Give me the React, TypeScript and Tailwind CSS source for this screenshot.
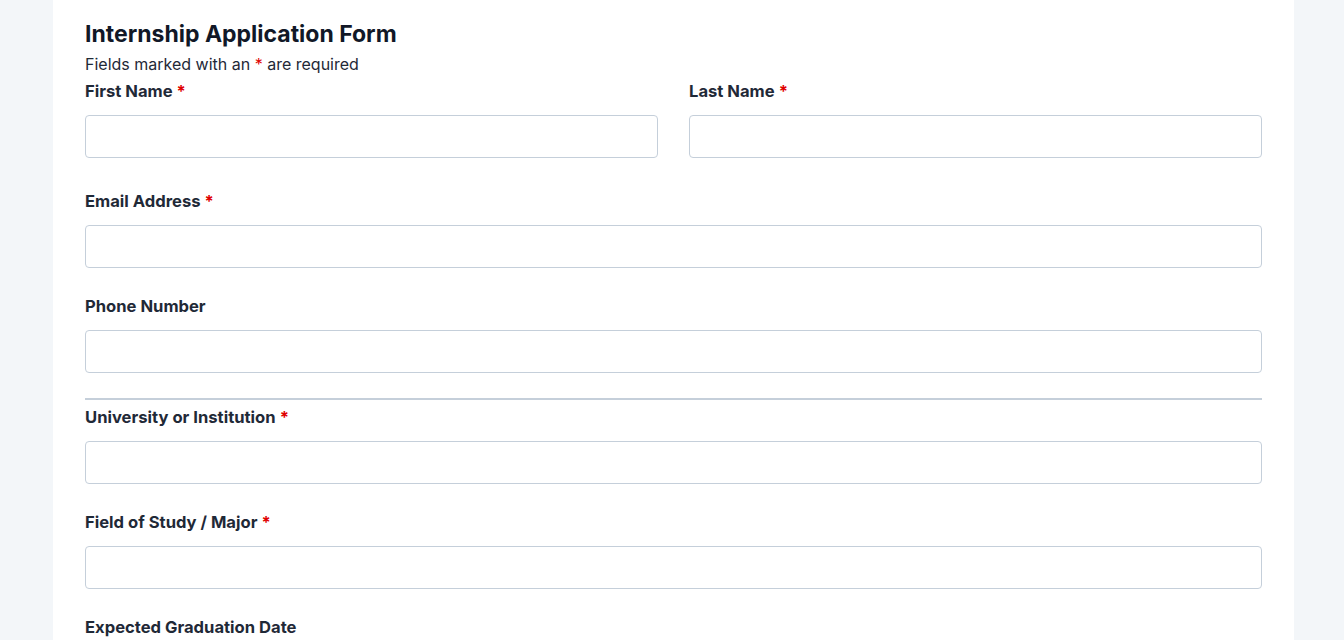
import React from 'react';

interface FieldProps {
  label: string;
  required?: boolean;
  type?: string;
}

const Field: React.FC<FieldProps> = ({ label, required, type = 'text' }) => (
  <div className="flex flex-col">
    <label className="text-[16.6px] leading-6 font-bold text-[#1f2937]">
      {label}
      {required && <span className="text-[#e00000] ml-1">*</span>}
    </label>
    <input
      type={type}
      className="mt-3 h-[43px] w-full rounded border border-[#c5cfda] bg-white px-3 outline-none"
    />
  </div>
);

const App: React.FC = () => {
  return (
    <div
      className="min-h-screen bg-[#f3f6f9] flex pl-[53px]"
      style={{ fontFamily: 'Inter, "Noto Sans", sans-serif' }}
    >
      <div className="w-[1241px] bg-white px-8 pt-5 pb-10">
        <h1 className="text-[23px] leading-7 font-bold text-[#111827]">Internship Application Form</h1>
        <p className="mt-1 text-base leading-6 text-[#1f2937]">
          Fields marked with an <span className="text-[#e00000]">*</span> are required
        </p>

        <div className="mt-[3px] grid grid-cols-2 gap-x-[31px]">
          <Field label="First Name" required />
          <Field label="Last Name" required />
        </div>

        <div className="mt-[31px]">
          <Field label="Email Address" required type="email" />
        </div>
        <div className="mt-[26px]">
          <Field label="Phone Number" type="tel" />
        </div>

        <hr className="mt-[25px] border-t-2 border-[#c5cfda]" />

        <div className="mt-[5px]">
          <Field label="University or Institution" required />
        </div>
        <div className="mt-[26px]">
          <Field label="Field of Study / Major" required />
        </div>
        <div className="mt-[26px]">
          <Field label="Expected Graduation Date" type="date" />
        </div>
      </div>
    </div>
  );
};

export default App;
